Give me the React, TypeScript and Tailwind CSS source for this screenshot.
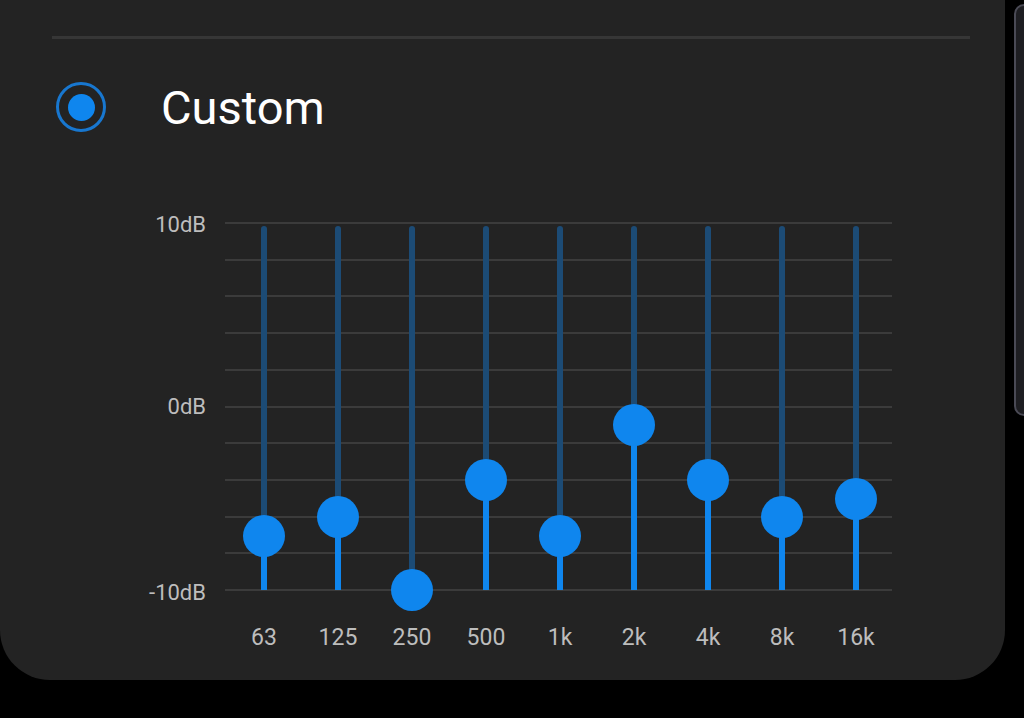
const BANDS = [
  { label: "63", y: 536 },
  { label: "125", y: 517 },
  { label: "250", y: 590 },
  { label: "500", y: 480 },
  { label: "1k", y: 536 },
  { label: "2k", y: 425 },
  { label: "4k", y: 480 },
  { label: "8k", y: 517 },
  { label: "16k", y: 499 },
];

// chart coordinates, relative to the chart box which starts at page y=180
const OFF = 180;
const TOP = 223 - OFF;
const BOTTOM = 590 - OFF;
const GRID = Array.from({ length: 11 }, (_, i) => TOP + ((BOTTOM - TOP) * i) / 10);

function Equalizer() {
  return (
    <div className="relative h-[500px] w-full">
      {GRID.map((y) => (
        <div key={y} className="absolute left-[225px] h-[2px] w-[667px] bg-[#3b3b3b]" style={{ top: y - 1 }} />
      ))}
      {[
        { t: "10dB", y: 225 },
        { t: "0dB", y: 407 },
        { t: "-10dB", y: 593 },
      ].map((l) => (
        <div
          key={l.t}
          className="absolute right-[799px] -translate-y-1/2 text-[22px] leading-none text-[#bdbdbd]"
          style={{ top: l.y - OFF }}
        >
          {l.t}
        </div>
      ))}
      {BANDS.map((b, i) => {
        const x = 264 + i * 74;
        const y = b.y - OFF;
        return (
          <div key={b.label}>
            <div className="absolute w-[6px] rounded-full bg-[#1c4b75]" style={{ left: x - 3, top: TOP + 3, height: BOTTOM - TOP - 3 }} />
            <div className="absolute w-[6px] bg-[#0f86ee]" style={{ left: x - 3, top: y, height: BOTTOM - y }} />
            <div className="absolute h-[42px] w-[42px] rounded-full bg-[#0f86ee]" style={{ left: x - 21, top: y - 21 }} />
            <div
              className="absolute w-[60px] -translate-x-1/2 text-center text-[23px] leading-none text-[#bdbdbd]"
              style={{ left: x, top: 626 - OFF }}
            >
              {b.label}
            </div>
          </div>
        );
      })}
    </div>
  );
}

export default function App() {
  return (
    <div className="flex h-[718px] w-[1024px] items-start overflow-hidden bg-black font-[Roboto]">
      <div className="flex h-[680px] w-[1005px] flex-col rounded-b-[50px] bg-[#232323] pt-[36px]">
        <div className="mx-[52px] h-[3px] w-[918px] bg-[#363636]" />
        <div className="ml-[56px] mt-[43px] flex h-[50px] items-center gap-[55px]">
          <div className="flex h-[50px] w-[50px] items-center justify-center rounded-full border-[3px] border-[#1877cf]">
            <div className="h-[27px] w-[27px] rounded-full bg-[#0f86ee]" />
          </div>
          <span className="text-[47px] leading-none text-white">Custom</span>
        </div>
        <div className="mt-[48px]">
          <Equalizer />
        </div>
      </div>
      <div className="ml-[9px] mt-[4px] h-[412px] w-[20px] shrink-0 rounded-[10px] border-2 border-[#4a4a55] bg-[#1e1e22]" />
    </div>
  );
}
